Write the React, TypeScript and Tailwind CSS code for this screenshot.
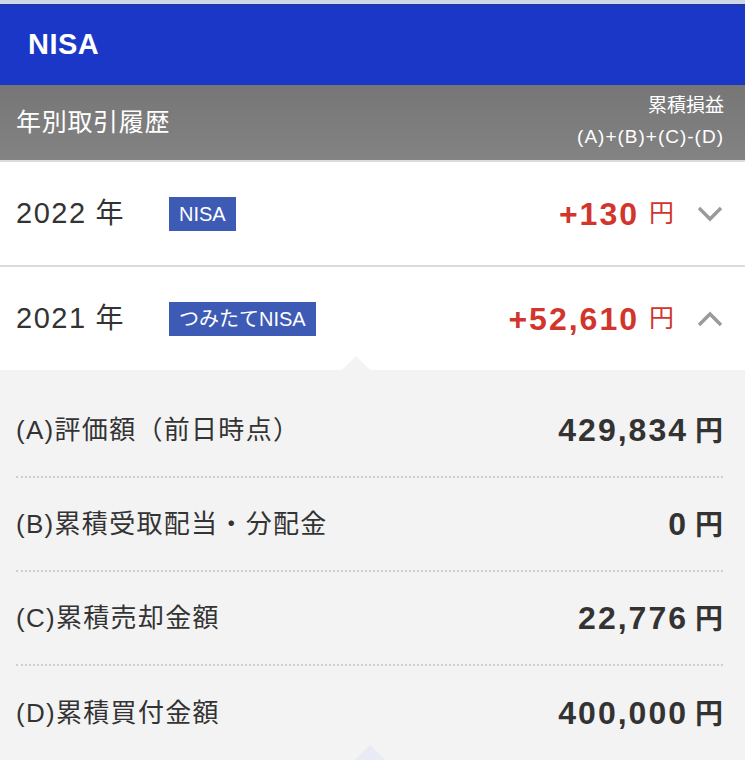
import React from 'react';

const FONT = '"Liberation Sans", "Noto Sans CJK JP", sans-serif';

const Chevron: React.FC<{ up?: boolean }> = ({ up }) => (
  <svg width="26" height="16" viewBox="0 0 26 16" className="shrink-0">
    <path
      d={up ? 'M2 14 L13 3 L24 14' : 'M2 2 L13 13 L24 2'}
      fill="none"
      stroke="#9a9a9a"
      strokeWidth="3.4"
    />
  </svg>
);

const YearRow: React.FC<{ year: string; badge: string; amount: string; open?: boolean }> = ({
  year,
  badge,
  amount,
  open,
}) => (
  <div className="relative h-[103px] bg-white flex items-center pl-[16px] pr-[22px]">
    <div className="w-[153px] text-[#333] flex items-center">
      <span className="text-[29px] tracking-[1.5px]">{year}</span>
      <span className="ml-[9px] text-[28px]">年</span>
    </div>
    <span className="h-[34px] px-[10px] flex items-center bg-[#3d5bb5] text-white text-[20px]">{badge}</span>
    <div className="ml-auto flex items-center">
      <span className="text-[#d1352b] text-[32px] font-bold tracking-[2px]">{amount}</span>
      <span className="text-[#d1352b] text-[25px] ml-[10px]">円</span>
      <span className="ml-[23px]">
        <Chevron up={open} />
      </span>
    </div>
    {open && (
      <div className="absolute left-[342px] bottom-0 w-0 h-0 border-l-[14px] border-r-[14px] border-b-[14px] border-l-transparent border-r-transparent border-b-[#f3f3f3]" />
    )}
  </div>
);

const DETAILS = [
  { label: '(A)評価額（前日時点）', value: '429,834' },
  { label: '(B)累積受取配当・分配金', value: '0' },
  { label: '(C)累積売却金額', value: '22,776' },
  { label: '(D)累積買付金額', value: '400,000' },
];

export default function App() {
  return (
    <div className="w-full h-[760px] overflow-hidden bg-[#f3f3f3]" style={{ fontFamily: FONT }}>
      <div className="h-[5px] bg-[#cfd8ea] border-b border-[#2a3a80]" />
      <div className="h-[80px] bg-[#1a37c8] flex items-center px-[28px] text-white text-[29px] font-semibold tracking-[0.5px]">
        NISA
      </div>
      <div className="h-[75px] bg-gradient-to-b from-[#767676] to-[#838383] flex items-center justify-between pl-[16px] pr-[21px] text-white">
        <div className="text-[25px] tracking-[0.7px]">年別取引履歴</div>
        <div className="text-right text-[19px] leading-[31px] -mt-[4px]">
          <div>累積損益</div>
          <div className="tracking-[1px]">(A)+(B)+(C)-(D)</div>
        </div>
      </div>
      <div className="h-[2px] bg-[#dcdcdc]" />
      <YearRow year="2022" badge="NISA" amount="+130" />
      <div className="h-[2px] bg-[#dcdcdc]" />
      <YearRow year="2021" badge="つみたてNISA" amount="+52,610" open />

      <div className="relative bg-[#f3f3f3] pt-[14px] px-[16px] pr-[22px]">
        {DETAILS.map((d, i) => (
          <div
            key={d.label}
            className={
              'h-[94px] flex items-center justify-between text-[#333] ' +
              (i < DETAILS.length - 1 ? 'border-b-2 border-dotted border-[#cfcfcf]' : '')
            }
          >
            <span className="text-[26px] tracking-[1.3px]">{d.label}</span>
            <span className="flex items-baseline">
              <span className="text-[32px] font-bold tracking-[2px]">{d.value}</span>
              <span className="text-[28px] font-bold ml-[7px]">円</span>
            </span>
          </div>
        ))}
        <div className="absolute left-[354px] top-[375px] w-0 h-0 border-l-[16px] border-r-[16px] border-b-[16px] border-l-transparent border-r-transparent border-b-[#e8eaf6]" />
      </div>
    </div>
  );
}
